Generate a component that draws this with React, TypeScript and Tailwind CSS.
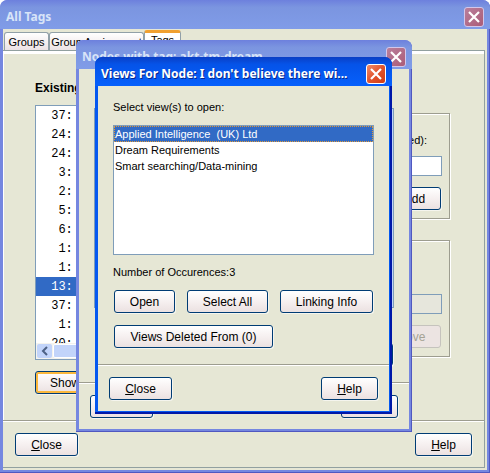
import type { ReactNode } from "react";
import { clsx } from "clsx";

const UI = "font-['Liberation_Sans',Arial,sans-serif]";

function CloseBox({ active = false }: { active?: boolean }) {
  return (
    <button
      type="button"
      aria-label="Close window"
      className={clsx(
        "flex size-5 shrink-0 items-center justify-center rounded-[3px] border",
        active
          ? "border-white bg-linear-to-br from-[#ee8a68] via-[#e2532c] to-[#cf3c12]"
          : "border-[#d3c6ea] bg-linear-to-br from-[#b97f9c] to-[#ab5c78]",
      )}
    >
      <svg viewBox="0 0 18 18" className="size-[18px]" aria-hidden="true">
        <path d="M4 4 L14 14 M14 4 L4 14" stroke="#fff" strokeWidth="2.2" fill="none" />
      </svg>
    </button>
  );
}

function TitleBar({ title, active = false }: { title: string; active?: boolean }) {
  return (
    <header
      className={clsx(
        "flex h-[29px] shrink-0 items-center justify-between rounded-t-[7px] pt-1 pr-[6px] pl-[6px]",
        active
          ? "bg-linear-to-b from-[#0a3fc4] via-[#0553e8] via-25% to-[#0660fc]"
          : "bg-linear-to-b from-[#6d80dd] via-[#7b95e0] via-25% to-[#809ce8]",
      )}
    >
      <h2
        className={clsx(
          "font-['Noto_Sans','Open_Sans',sans-serif] text-[12px] leading-4 font-bold whitespace-nowrap",
          active ? "text-white [text-shadow:1px_1px_0_#06288c]" : "text-[#d8e4f8]",
        )}
      >
        {title}
      </h2>
      <CloseBox active={active} />
    </header>
  );
}

function PushButton({
  children,
  className,
  focused = false,
  disabled = false,
}: {
  children?: ReactNode;
  className?: string;
  focused?: boolean;
  disabled?: boolean;
}) {
  return (
    <button
      type="button"
      disabled={disabled}
      className={clsx(
        "h-[23px] shrink-0 rounded-[3px] border text-[12px] leading-4 whitespace-nowrap",
        disabled
          ? "border-[#c5c3bd] bg-[#ece4e2] text-[#a5a395]"
          : "border-[#003c74] bg-linear-to-b from-white via-[#f6f0f0] to-[#ebe1e1] text-black shadow-[1px_1px_0_#f5f5ee]",
        focused && "inset-shadow-[0_0_0_2px_#fbb83c]",
        className,
      )}
    >
      {children}
    </button>
  );
}

function Rule() {
  return <div className="h-[2px] shrink-0 border-t border-b border-t-[#9d9d8f] border-b-white" />;
}

const tagCounts = [37, 24, 24, 3, 2, 5, 6, 1, 1, 13, 37, 1, 20];
const views = ["Applied Intelligence  (UK) Ltd", "Dream Requirements", "Smart searching/Data-mining"];

function AllTagsWindow() {
  return (
    <section className="flex h-screen flex-col rounded-t-[8px] bg-[#7587e0] inset-shadow-[-1px_-1px_0_#5058c0]">
      <TitleBar title="All Tags" />
      <div className="mx-[3px] mb-[3px] flex min-h-0 flex-1 flex-col bg-[#e6e7d5] pt-px">
        <div role="tablist" className="flex h-5 shrink-0 items-end px-px text-[12px]">
          <button type="button" role="tab" aria-selected="false" className="h-[18px] w-[45px] rounded-t-[3px] border border-b-0 border-[#91a0a8] bg-linear-to-b from-white to-[#ece2e4] pt-px text-[11px] leading-4">
            Groups
          </button>
          <button type="button" role="tab" aria-selected="false" className="h-[18px] w-[95px] rounded-t-[3px] border border-b-0 border-[#91a0a8] bg-linear-to-b from-white to-[#ece2e4] pt-px text-[11px] leading-4 whitespace-nowrap">
            Group Assignment
          </button>
          <button type="button" role="tab" aria-selected="true" className="h-5 w-[37px] rounded-t-[3px] border border-t-[3px] border-b-0 border-[#91a0a8] border-t-[#f0a030] bg-white pb-1 text-[11px] leading-3">
            Tags
          </button>
        </div>
        <div role="tabpanel" className="mr-[2px] mb-[2px] flex min-h-0 flex-1 flex-col border border-l-0 border-[#91a0a0]">
          <div className="flex min-h-0 flex-1 border-t-[3px] border-l border-white pr-[34px] pl-[31px]">
            <div className="flex min-w-0 flex-1 flex-col pt-[26px]">
              <h3 className="text-[12px] leading-4 font-bold">Existing Tags</h3>
              <div className="mt-[9px] flex h-[255px] w-[200px] flex-col border border-[#7f9db9] bg-white">
                <ul role="listbox" aria-label="Existing tags" className="min-h-0 flex-1 overflow-hidden font-['Liberation_Mono',monospace] text-[12px] leading-[19px]">
                  {tagCounts.map((count, i) => (
                    <li
                      key={i}
                      role="option"
                      aria-selected={i === 9}
                      className={clsx("h-[19px] pt-px pl-2 whitespace-pre", i === 9 && "bg-[#316ac5] text-white")}
                    >
                      {String(count).padStart(3, " ")}:
                    </li>
                  ))}
                </ul>
                <div className="flex h-4 shrink-0 gap-px bg-[#f4f3ee] p-px">
                  <button type="button" aria-label="Scroll left" className="flex w-[15px] items-center justify-center rounded-[2px] bg-[#c2d4fa]">
                    <svg viewBox="0 0 10 10" className="size-[10px]" aria-hidden="true">
                      <path d="M7 1 L3 5 L7 9" stroke="#4d6185" strokeWidth="2" fill="none" />
                    </svg>
                  </button>
                  <div className="flex-1 rounded-[2px] border border-white bg-[#c2d4fa]" />
                </div>
              </div>
              <PushButton focused className="mt-[11px] w-[110px] pl-[14px] text-left">
                Show Nodes
              </PushButton>
            </div>
            <div className="flex w-[200px] shrink-0 flex-col gap-[21px] pt-[59px]">
              <fieldset className="flex h-[106px] flex-col items-end border border-[#9d9d8f] pt-[18px] pr-[7px] shadow-[1px_1px_0_#fff,inset_1px_1px_0_#fff]">
                <label htmlFor="new-tags" className="pr-[15px] text-[11px] leading-4">
                  New tags (comma separated):
                </label>
                <input id="new-tags" type="text" className="mt-2 h-5 w-[180px] border border-[#7f9db9] bg-white" />
                <PushButton className="mt-[11px] mr-px w-[60px] pl-[7px]">Add</PushButton>
              </fieldset>
              <fieldset className="flex h-[117px] flex-col items-end border border-[#9d9d8f] pt-[53px] pr-[7px] shadow-[1px_1px_0_#fff,inset_1px_1px_0_#fff]">
                <input type="text" aria-label="Selected tag" disabled className="h-5 w-[180px] border border-[#7f9db9] bg-[#e6e6dc]" />
                <PushButton disabled className="mt-[11px] mr-px w-[76px]">
                  Remove
                </PushButton>
              </fieldset>
            </div>
          </div>
          <Rule />
          <footer className="flex h-[45px] shrink-0 items-center justify-between px-3">
            <PushButton className="w-[63px]">
              <u>C</u>lose
            </PushButton>
            <PushButton className="w-[57px]">
              <u>H</u>elp
            </PushButton>
          </footer>
        </div>
      </div>
    </section>
  );
}

function NodesWindow() {
  return (
    <section className="absolute top-10 left-[76px] flex h-[392px] w-[336px] flex-col rounded-t-[8px] bg-[#7587e0] inset-shadow-[-1px_-1px_0_#5058c0]">
      <TitleBar title="Nodes with tag: akt-tm-dream" />
      <div className="mx-[3px] mb-[3px] flex flex-1 flex-col bg-[#e6e7d5]">
        <div className="flex flex-1 flex-col items-end px-[15px] pt-[39px]">
          <div className="h-[200px] w-full border border-[#7f9db9] bg-[#c2d4fa]" />
          <PushButton className="mt-[35px] mr-px w-[80px]">Open</PushButton>
        </div>
        <Rule />
        <footer className="flex h-[45px] shrink-0 items-center justify-between px-[11px]">
          <PushButton className="w-[63px]" />
          <PushButton className="w-[57px]" />
        </footer>
      </div>
    </section>
  );
}

function ViewsDialog() {
  return (
    <section
      role="dialog"
      aria-label="Views For Node"
      className="absolute top-[57px] left-[95px] flex w-[297px] flex-col rounded-t-[8px] bg-[#0558f0] inset-shadow-[-2px_-2px_0_#0018a8]"
    >
      <TitleBar active title="Views For Node: I don't believe there wi..." />
      <div className="mx-[3px] mb-[3px] flex flex-col bg-[#e6e7d5]">
        <div className="flex flex-col px-[15px] pt-[13px] pb-4">
          <p className="text-[11px] leading-4">Select view(s) to open:</p>
          <ul role="listbox" aria-label="Views" className="mt-[10px] h-[130px] border border-[#7f9db9] bg-white text-[11px] leading-4">
            {views.map((view, i) => (
              <li
                key={view}
                role="option"
                aria-selected={i === 0}
                className={clsx(
                  "h-4 pl-px whitespace-pre",
                  i === 0 && "bg-[#316ac5] text-white outline outline-offset-[-1px] outline-[#e09a3a] outline-dotted",
                )}
              >
                {view}
              </li>
            ))}
          </ul>
          <p className="mt-[9px] text-[11px] leading-4">Number of Occurences:3</p>
          <div className="mt-[10px] flex gap-3 pl-px">
            <PushButton className="w-[61px]">Open</PushButton>
            <PushButton className="w-[81px]">Select All</PushButton>
            <PushButton className="w-[93px]">Linking Info</PushButton>
          </div>
          <div className="mt-3 flex pl-px">
            <PushButton className="w-[159px]">Views Deleted From (0)</PushButton>
          </div>
        </div>
        <Rule />
        <footer className="flex h-[45px] shrink-0 items-center justify-between px-[11px]">
          <PushButton className="w-[63px]">
            <u>C</u>lose
          </PushButton>
          <PushButton className="w-[57px]">
            <u>H</u>elp
          </PushButton>
        </footer>
      </div>
    </section>
  );
}

export default function App() {
  return (
    <main className={clsx("relative min-h-screen overflow-hidden bg-white text-black", UI)}>
      <AllTagsWindow />
      <NodesWindow />
      <ViewsDialog />
    </main>
  );
}
